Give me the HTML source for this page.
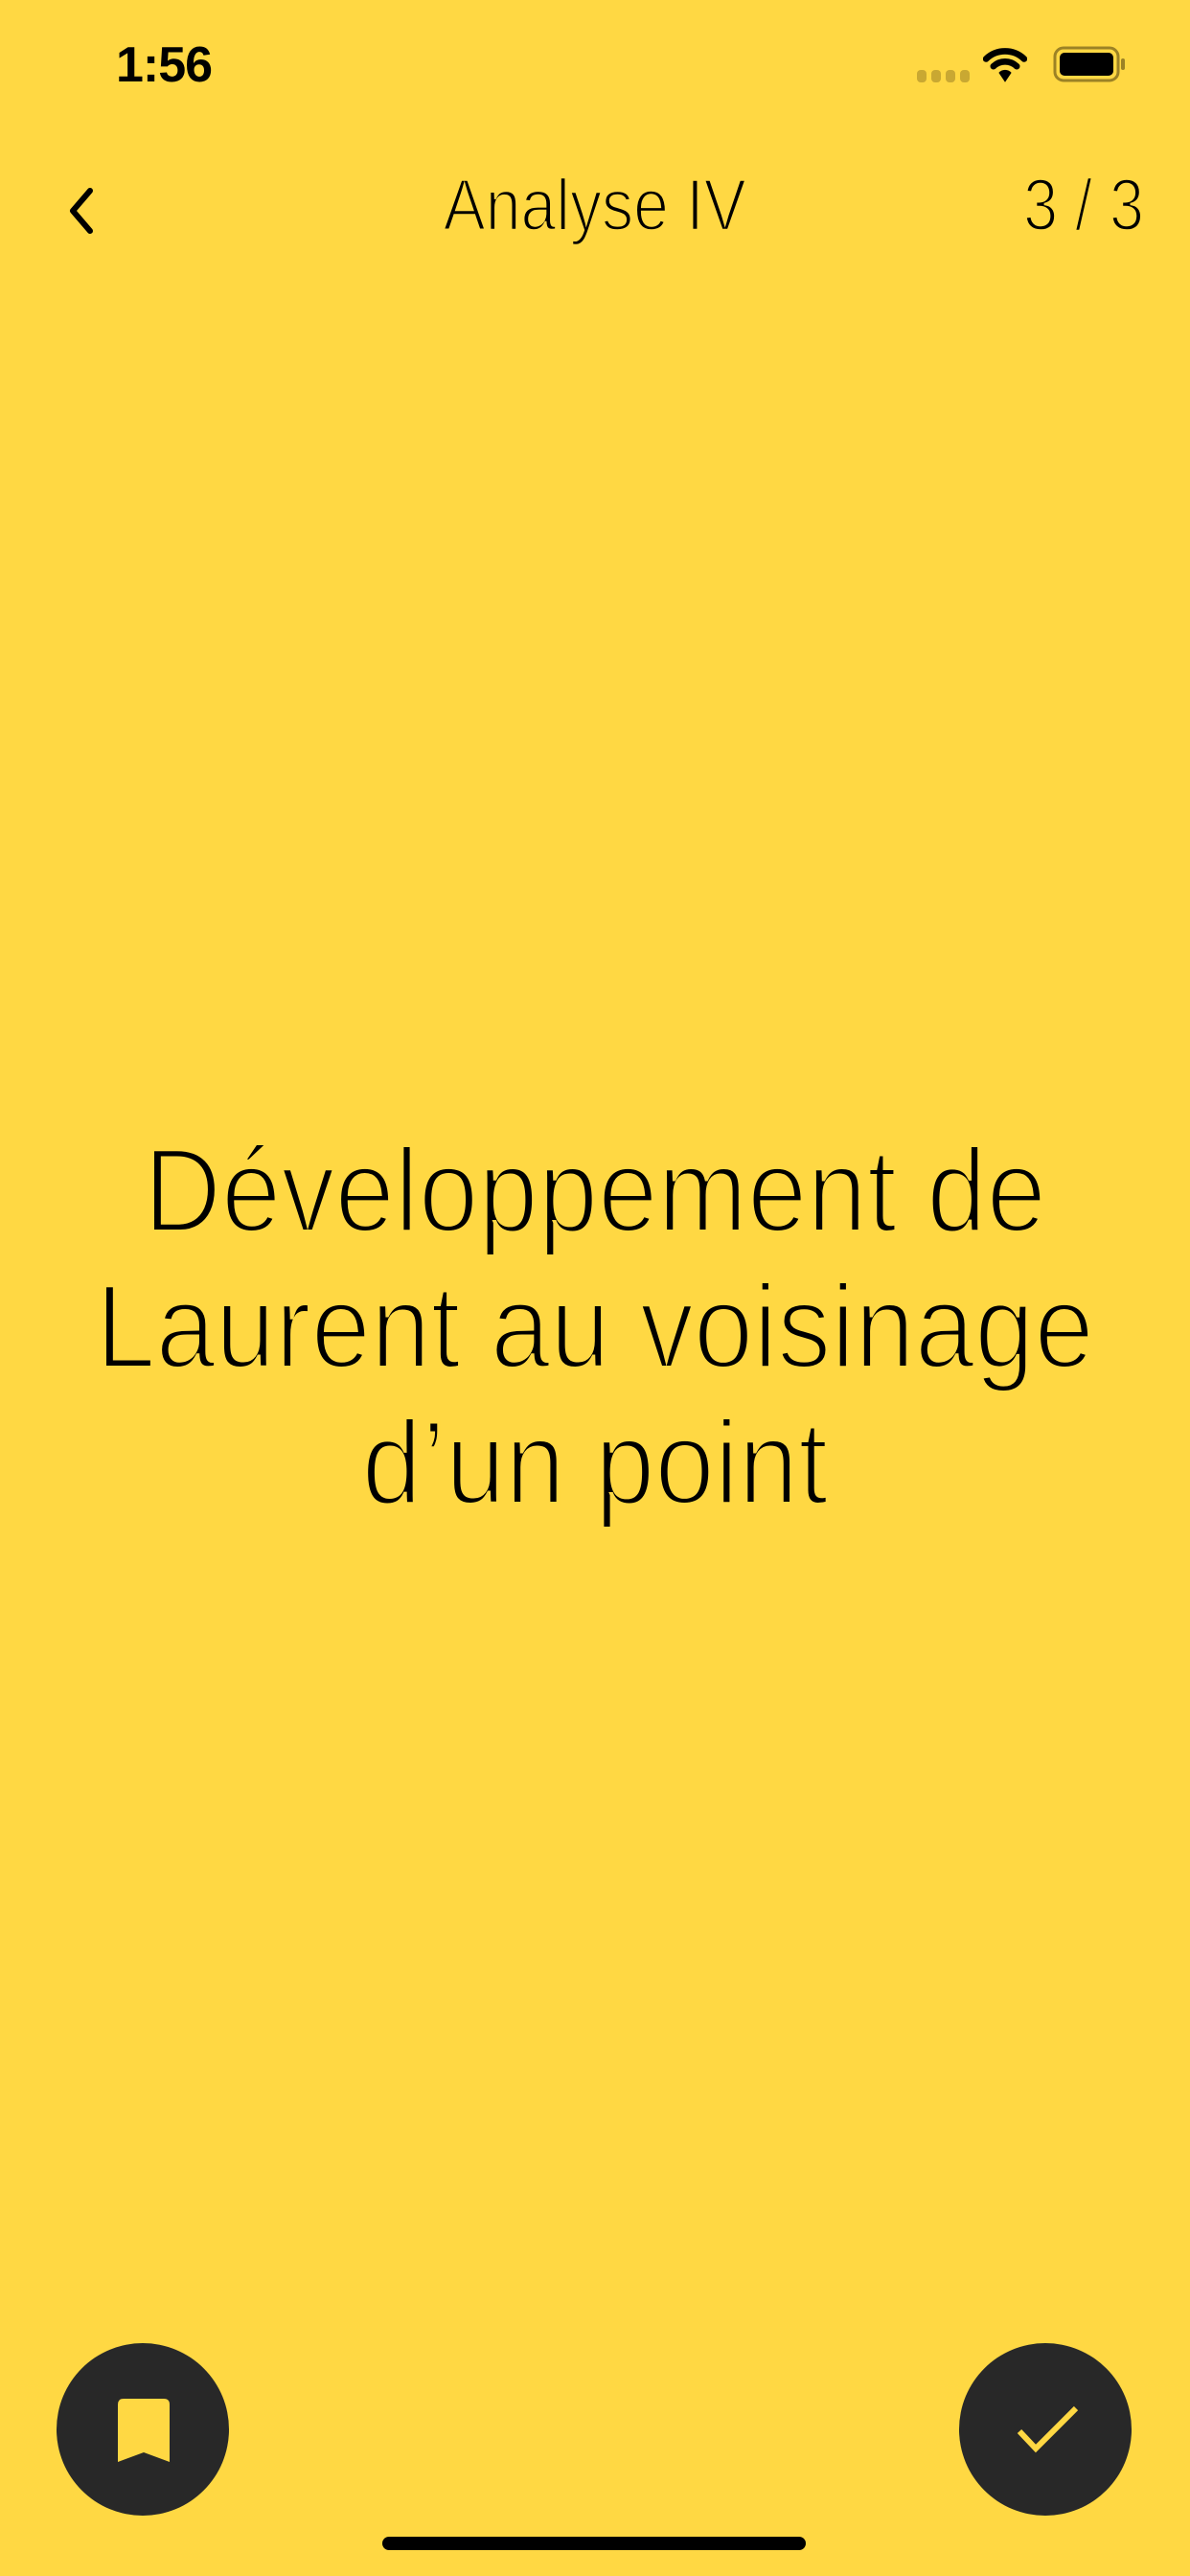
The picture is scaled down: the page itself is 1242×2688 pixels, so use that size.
<!DOCTYPE html>
<html><head><meta charset="utf-8"><style>
html,body{margin:0;padding:0;}
body{width:1242px;height:2688px;background:#FFD843;position:relative;overflow:hidden;font-family:"Liberation Sans",sans-serif;color:#000;}
.abs{position:absolute;}
.time{left:121px;top:38px;font-size:52px;font-weight:bold;letter-spacing:-1px;}
.title{left:0;width:1242px;top:170px;text-align:center;font-size:76px;line-height:90px;-webkit-text-stroke:2.5px #FFD843;}
.title span{display:inline-block;transform:scaleX(0.87);}
.count{right:48px;top:170px;font-size:76px;line-height:90px;transform:scaleX(0.85);transform-origin:right;-webkit-text-stroke:2.5px #FFD843;}
.main{left:0;width:1242px;top:1172px;text-align:center;font-size:124px;line-height:142px;-webkit-text-stroke:4px #FFD843;}
.main div{transform:scaleX(0.905);}
.btn{width:180px;height:180px;border-radius:50%;background:#282828;top:2445px;}
.bar{left:399px;top:2647px;width:442px;height:14px;border-radius:7px;background:#000;}
</style></head><body>
<div class="abs time">1:56</div>
<div class="abs" style="left:957px;top:73px;">
<svg width="56" height="14"><g fill="#C9A832"><rect x="0" y="0" width="10" height="13" rx="4"/><rect x="15" y="0" width="10" height="13" rx="4"/><rect x="30" y="0" width="10" height="13" rx="4"/><rect x="45" y="0" width="10" height="13" rx="4"/></g></svg></div>
<svg class="abs" style="left:1026px;top:46px" width="46" height="42" viewBox="0 0 40 38"><path d="M2 14 A26 26 0 0 1 38 14" stroke="#000" stroke-width="6" fill="none" stroke-linecap="round"/><path d="M9 21 A16 16 0 0 1 31 21" stroke="#000" stroke-width="6" fill="none" stroke-linecap="round"/><path d="M14 27 L20 36 L26 27 A8 8 0 0 0 14 27Z" fill="#000"/></svg>
<svg class="abs" style="left:1099px;top:48px" width="76" height="38" viewBox="0 0 76 38"><rect x="2" y="2" width="66" height="34" rx="9" fill="none" stroke="#9C8225" stroke-width="3"/><rect x="7" y="7" width="56" height="24" rx="5" fill="#000"/><rect x="71" y="13" width="4" height="12" rx="2" fill="#9C8225"/></svg>
<svg class="abs" style="left:66px;top:194px" width="36" height="52" viewBox="0 0 36 52"><path d="M28 5 L10 26 L28 47" stroke="#000" stroke-width="6" fill="none" stroke-linecap="round" stroke-linejoin="round"/></svg>
<div class="abs title"><span>Analyse IV</span></div>
<div class="abs count">3 / 3</div>
<div class="abs main"><div>Développement de</div><div>Laurent au voisinage</div><div>d’un point</div></div>
<div class="abs btn" style="left:59px"><svg style="position:absolute;left:64px;top:58px" width="54" height="68" viewBox="0 0 54 68"><path d="M0 66 L0 6 Q0 0 6 0 L48 0 Q54 0 54 6 L54 66 L27 56 Z" fill="#FFD843"/></svg></div>
<div class="abs btn" style="left:1001px"><svg style="position:absolute;left:58px;top:62px" width="70" height="60" viewBox="0 0 70 60"><path d="M5 30 L22 48 L64 6" stroke="#FFD843" stroke-width="6" fill="none"/></svg></div>
<div class="abs bar"></div>
</body></html>
